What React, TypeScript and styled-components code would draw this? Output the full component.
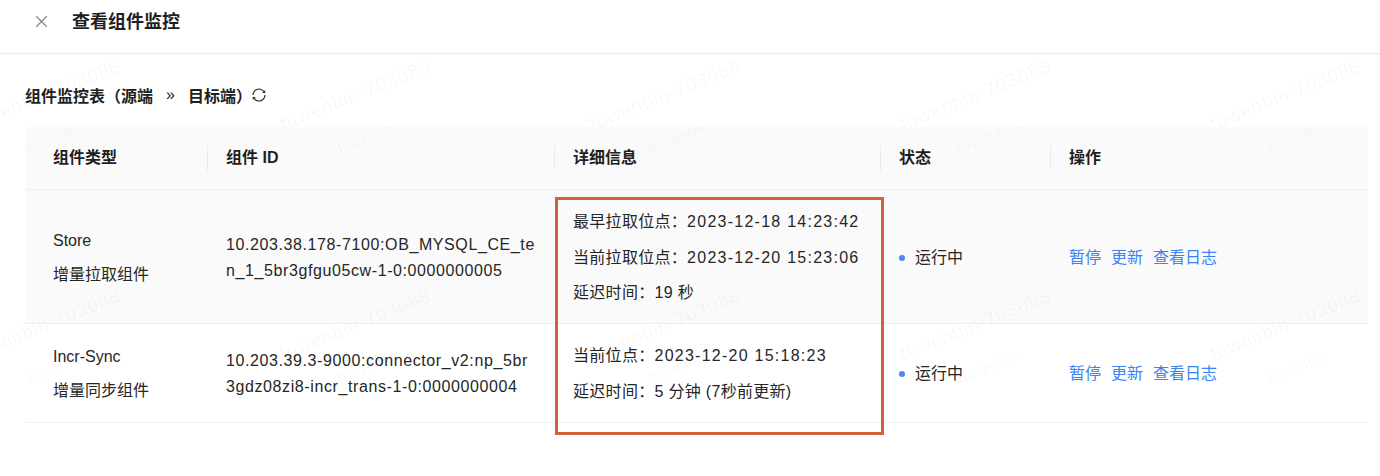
import React from 'react';
import styled, { createGlobalStyle } from 'styled-components';
import { AiOutlineClose, AiOutlineSync } from 'react-icons/ai';

const GlobalStyle = createGlobalStyle`
  html, body {
    margin: 0;
    padding: 0;
    background: #fff;
  }
  body {
    font-family: "Liberation Sans", "Noto Sans CJK SC", sans-serif;
    color: #262626;
    font-size: 16px;
  }
`;

const Page = styled.div`
  position: relative;
  width: 1380px;
  height: 476px;
  overflow: hidden;
  background: #fff;
`;

const Header = styled.div`
  display: flex;
  align-items: center;
  gap: 22px;
  height: 54px;
  box-sizing: border-box;
  padding: 0 0 10px 33px;
  border-bottom: 1px solid #ebebeb;
`;

const CloseButton = styled.span`
  display: flex;
  align-items: center;
  color: #8a8a8a;
  font-size: 17px;
`;

const Title = styled.h1`
  margin: 0;
  font-size: 18px;
  line-height: 24px;
  font-weight: 600;
  color: #1f1f1f;
`;

const Content = styled.div`
  padding: 30px 12px 0 25px;
`;

const SectionTitle = styled.div`
  display: flex;
  align-items: center;
  height: 22px;
  margin-bottom: 21px;
  font-size: 16px;
  font-weight: 600;
  color: #1f1f1f;
`;

const Chevron = styled.span`
  font-weight: 400;
  margin: 0 13px 0 13px;
`;

const RefreshIcon = styled.span`
  display: flex;
  align-items: center;
  margin-left: -1px;
  font-size: 16px;
  color: #333;
`;

const TableWrap = styled.div`
  position: relative;
`;

const Table = styled.table`
  width: 1343px;
  table-layout: fixed;
  border-collapse: separate;
  border-spacing: 0;
`;

const Th = styled.th`
  position: relative;
  text-align: left;
  padding: 20px 19px;
  line-height: 22px;
  font-size: 16px;
  font-weight: 600;
  color: #1f1f1f;
  background: #fafafa;
  border-bottom: 1px solid #f0f0f0;

  &:first-child {
    padding-left: 28px;
  }

  &:not(:first-child)::before {
    content: '';
    position: absolute;
    left: 0;
    top: 50%;
    width: 1px;
    height: 25px;
    transform: translateY(-50%);
    background: #ebebeb;
  }
`;

const Row = styled.tr<{ $shaded?: boolean }>`
  background: ${(p) => (p.$shaded ? '#fafafa' : '#fff')};
`;

const Td = styled.td`
  padding: 21px 19px 19px;
  vertical-align: middle;
  font-size: 16px;
  line-height: 22px;
  color: #262626;
  border-bottom: 1px solid #f0f0f0;

  &:first-child {
    padding-left: 28px;
  }
`;

const Stack = styled.div<{ $gap: number }>`
  display: flex;
  flex-direction: column;
  gap: ${(p) => p.$gap}px;
`;

const IdLine = styled.div`
  line-height: 26px;
  letter-spacing: 0.6px;
  white-space: nowrap;
`;

const DetailLine = styled.span`
  letter-spacing: 0.3px;
  white-space: nowrap;
`;

const Time = styled.span`
  letter-spacing: 1.25px;
`;

const Status = styled.div`
  display: flex;
  align-items: center;
  gap: 10px;
`;

const Dot = styled.span`
  width: 6px;
  height: 6px;
  border-radius: 50%;
  background: #4a88f2;
`;

const Actions = styled.div`
  display: flex;
  gap: 10px;
`;

const ActionLink = styled.a`
  color: #3d82f5;
  cursor: pointer;
  text-decoration: none;
`;

const Highlight = styled.div`
  position: absolute;
  left: 530px;
  top: 70px;
  width: 329px;
  height: 238px;
  box-sizing: border-box;
  border: 3px solid #d3603c;
  pointer-events: none;
  z-index: 2;
`;

const Watermarks = styled.div`
  position: absolute;
  left: -110px;
  top: -5px;
  display: grid;
  grid-template-columns: repeat(6, 310px);
  grid-auto-rows: 230px;
  pointer-events: none;
  z-index: 1;
`;

const Tile = styled.div`
  display: flex;
  flex-direction: column;
  align-items: center;
  gap: 24px;
  padding-top: 90px;
  color: rgba(0, 0, 0, 0.038);
  font-family: "Liberation Sans", sans-serif;
`;

const MarkBig = styled.span`
  font-size: 19px;
  line-height: 20px;
  letter-spacing: 1px;
  transform: rotate(-22deg);
`;

const MarkSmall = styled.span`
  font-size: 15px;
  line-height: 16px;
  letter-spacing: 0.5px;
  transform: translateX(13px) rotate(-22deg);
`;

interface Detail {
  label: string;
  value: string;
  time?: boolean;
}

interface Component {
  type: string;
  name: string;
  idLines: string[];
  details: Detail[];
  shaded?: boolean;
}

const rows: Component[] = [
  {
    type: 'Store',
    name: '增量拉取组件',
    idLines: ['10.203.38.178-7100:OB_MYSQL_CE_te', 'n_1_5br3gfgu05cw-1-0:0000000005'],
    details: [
      { label: '最早拉取位点：', value: '2023-12-18 14:23:42', time: true },
      { label: '当前拉取位点：', value: '2023-12-20 15:23:06', time: true },
      { label: '延迟时间：', value: '19 秒' },
    ],
    shaded: true,
  },
  {
    type: 'Incr-Sync',
    name: '增量同步组件',
    idLines: ['10.203.39.3-9000:connector_v2:np_5br', '3gdz08zi8-incr_trans-1-0:0000000004'],
    details: [
      { label: '当前位点：', value: '2023-12-20 15:18:23', time: true },
      { label: '延迟时间：', value: '5 分钟 (7秒前更新)' },
    ],
  },
];

export default function App() {
  return (
    <Page>
      <GlobalStyle />
      <Header>
        <CloseButton>
          <AiOutlineClose />
        </CloseButton>
        <Title>查看组件监控</Title>
      </Header>
      <Content>
        <SectionTitle>
          组件监控表（源端<Chevron>»</Chevron>目标端）
          <RefreshIcon>
            <AiOutlineSync />
          </RefreshIcon>
        </SectionTitle>
        <TableWrap>
          <Table>
            <colgroup>
              <col style={{ width: 182 }} />
              <col style={{ width: 347 }} />
              <col style={{ width: 326 }} />
              <col style={{ width: 170 }} />
              <col style={{ width: 318 }} />
            </colgroup>
            <thead>
              <tr>
                <Th>组件类型</Th>
                <Th>组件 ID</Th>
                <Th>详细信息</Th>
                <Th>状态</Th>
                <Th>操作</Th>
              </tr>
            </thead>
            <tbody>
              {rows.map((r) => (
                <Row key={r.type} $shaded={r.shaded}>
                  <Td>
                    <Stack $gap={12}>
                      <span>{r.type}</span>
                      <span>{r.name}</span>
                    </Stack>
                  </Td>
                  <Td>
                    {r.idLines.map((line) => (
                      <IdLine key={line}>{line}</IdLine>
                    ))}
                  </Td>
                  <Td>
                    <Stack $gap={13.5}>
                      {r.details.map((d) => (
                        <DetailLine key={d.label + d.value}>
                          {d.label}
                          {d.time ? <Time>{d.value}</Time> : d.value}
                        </DetailLine>
                      ))}
                    </Stack>
                  </Td>
                  <Td>
                    <Status>
                      <Dot />
                      运行中
                    </Status>
                  </Td>
                  <Td>
                    <Actions>
                      <ActionLink>暂停</ActionLink>
                      <ActionLink>更新</ActionLink>
                      <ActionLink>查看日志</ActionLink>
                    </Actions>
                  </Td>
                </Row>
              ))}
            </tbody>
          </Table>
          <Highlight />
        </TableWrap>
      </Content>
      <Watermarks>
        {Array.from({ length: 18 }).map((_, i) => (
          <Tile key={i}>
            <MarkBig>fuwenbin-703088</MarkBig>
            <MarkSmall>fuwenbin</MarkSmall>
          </Tile>
        ))}
      </Watermarks>
    </Page>
  );
}
